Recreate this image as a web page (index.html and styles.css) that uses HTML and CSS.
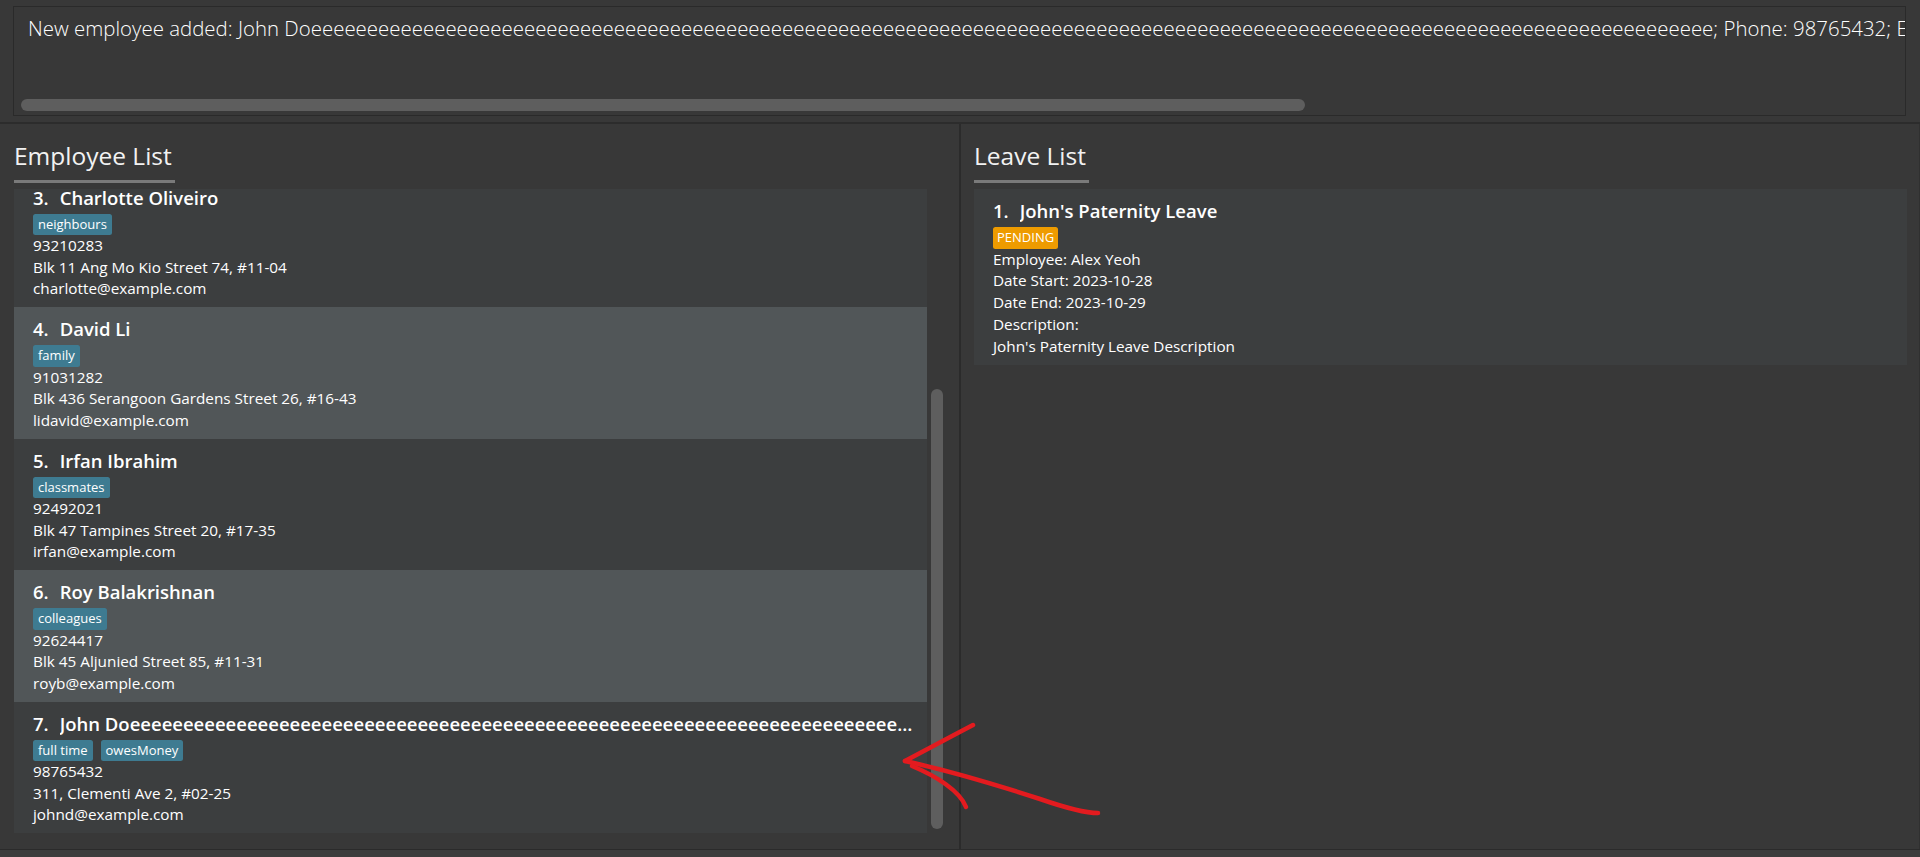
FILE: index.html
```html
<!DOCTYPE html>
<html lang="en">
<head>
<meta charset="utf-8">
<title>HR Manager</title>
<link rel="stylesheet" href="styles.css">
</head>
<body>
<div class="app">
  <div class="result-area">
    <div class="result-box">
      <div class="result-viewport">
        <div class="result-text">New employee added: John Doeeeeeeeeeeeeeeeeeeeeeeeeeeeeeeeeeeeeeeeeeeeeeeeeeeeeeeeeeeeeeeeeeeeeeeeeeeeeeeeeeeeeeeeeeeeeeeeeeeeeeeeeeeeeeeeeeeeeeeeeeeeee; Phone: 98765432; Email: johnd@example.com; Address: 311, Clementi Ave 2, #02-25; Tags: [full time][owesMoney]</div>
      </div>
      <div class="hscroll"><div class="hthumb"></div></div>
    </div>
  </div>
  <div class="hdivider"></div>
  <div class="panels">
    <section class="panel panel-left">
      <div class="panel-head"><h2 class="panel-title">Employee List</h2></div>
      <div class="list-view">
        <div class="list-viewport">
          <div class="list-content scrolled">
            <div class="card">
              <div class="card-title"><span class="card-id">3.</span><span class="card-name">Charlotte Oliveiro</span></div>
              <div class="tags"><span class="tag">neighbours</span></div>
              <div class="line">93210283</div>
              <div class="line">Blk 11 Ang Mo Kio Street 74, #11-04</div>
              <div class="line">charlotte@example.com</div>
            </div>
            <div class="card">
              <div class="card-title"><span class="card-id">4.</span><span class="card-name">David Li</span></div>
              <div class="tags"><span class="tag">family</span></div>
              <div class="line">91031282</div>
              <div class="line">Blk 436 Serangoon Gardens Street 26, #16-43</div>
              <div class="line">lidavid@example.com</div>
            </div>
            <div class="card">
              <div class="card-title"><span class="card-id">5.</span><span class="card-name">Irfan Ibrahim</span></div>
              <div class="tags"><span class="tag">classmates</span></div>
              <div class="line">92492021</div>
              <div class="line">Blk 47 Tampines Street 20, #17-35</div>
              <div class="line">irfan@example.com</div>
            </div>
            <div class="card">
              <div class="card-title"><span class="card-id">6.</span><span class="card-name">Roy Balakrishnan</span></div>
              <div class="tags"><span class="tag">colleagues</span></div>
              <div class="line">92624417</div>
              <div class="line">Blk 45 Aljunied Street 85, #11-31</div>
              <div class="line">royb@example.com</div>
            </div>
            <div class="card">
              <div class="card-title"><span class="card-id">7.</span><span class="card-name">John Doeeeeeeeeeeeeeeeeeeeeeeeeeeeeeeeeeeeeeeeeeeeeeeeeeeeeeeeeeeeeeeeeeeeeeeeeeeeeeeeeeeeeeeeeeeeeeeeeeeeeeeeeeeeeeeeeeeeeeeeeeeeee</span></div>
              <div class="tags"><span class="tag">full time</span><span class="tag">owesMoney</span></div>
              <div class="line">98765432</div>
              <div class="line">311, Clementi Ave 2, #02-25</div>
              <div class="line">johnd@example.com</div>
            </div>
          </div>
        </div>
        <div class="vscroll"><div class="vthumb"></div></div>
      </div>
    </section>
    <div class="vdivider"></div>
    <section class="panel panel-right">
      <div class="panel-head"><h2 class="panel-title">Leave List</h2></div>
      <div class="list-view">
        <div class="list-viewport">
          <div class="list-content">
            <div class="card leave-card">
              <div class="card-title"><span class="card-id">1.</span><span class="card-name">John's Paternity Leave</span></div>
              <div class="tags"><span class="tag tag-pending">PENDING</span></div>
              <div class="line">Employee: Alex Yeoh</div>
              <div class="line">Date Start: 2023-10-28</div>
              <div class="line">Date End: 2023-10-29</div>
              <div class="line">Description:</div>
              <div class="line">John's Paternity Leave Description</div>
            </div>
          </div>
        </div>
      </div>
    </section>
    <div class="edge"></div>
  </div>
  <div class="status-line"></div>
  <div class="status-bar"></div>
</div>
<svg class="annotation" width="1920" height="857" viewBox="0 0 1920 857" xmlns="http://www.w3.org/2000/svg">
  <g fill="none" stroke="#e31b1f" stroke-width="4.5" stroke-linecap="round" stroke-linejoin="round">
    <path d="M973 725 C 950 737, 926 750, 905 761"/>
    <path d="M905 761 C 932 767, 985 781, 1040 799 C 1066 808, 1085 813, 1098 813"/>
    <path d="M912 766 C 936 776, 960 791, 966 807"/>
  </g>
</svg>
</body>
</html>
```
FILE: styles.css
```css
* {
  box-sizing: border-box;
}

html, body {
  margin: 0;
  padding: 0;
  width: 1920px;
  height: 857px;
  overflow: hidden;
  background: #383838;
}

body {
  position: relative;
  font-family: "Open Sans", "Noto Sans", sans-serif;
  color: #ffffff;
}

.app {
  display: flex;
  flex-direction: column;
  width: 1920px;
  height: 857px;
  background: #383838;
}

/* ---------- result display ---------- */
.result-area {
  height: 122px;
  padding: 6px 14px 6px 13px;
  flex: none;
}

.result-box {
  height: 110px;
  border: 1px solid #2a2a2a;
  background: #383838;
  display: flex;
  flex-direction: column;
}

.result-viewport {
  flex: 1;
  overflow: hidden;
  padding: 8px 0 0 14px;
}

.result-text {
  white-space: nowrap;
  font-weight: 300;
  font-size: 20.4px;
  line-height: 27.8px;
  letter-spacing: 0.02px;
  color: #ffffff;
}

.hscroll {
  height: 16px;
  padding: 0 0 0 7px;
  flex: none;
}

.hthumb {
  width: 1284px;
  height: 12px;
  border-radius: 6px;
  background: #5e5e5e;
}

.hdivider {
  height: 2px;
  background: #2c2c2c;
  flex: none;
}

/* ---------- panels ---------- */
.panels {
  height: 725px;
  display: flex;
  flex: none;
}

.panel {
  display: flex;
  flex-direction: column;
}

.panel-left {
  width: 959px;
  padding: 14.5px 11px 0 14px;
}

.panel-right {
  width: 958px;
  padding: 14.5px 12px 0 13px;
}

.vdivider {
  width: 2px;
  background: #2b2b2b;
}

.edge {
  width: 1px;
  background: #303030;
}

.panel-head {
  margin-bottom: 6px;
}

.panel-title {
  display: inline-block;
  margin: 0;
  padding: 0 3px 7.5px 0;
  font-size: 24.5px;
  font-weight: 400;
  line-height: 34px;
  color: #f2f2f2;
  border-bottom: 3px solid #7a7a7a;
}

.list-view {
  display: flex;
  height: 645px;
}

.list-viewport {
  flex: 1;
  min-width: 0;
  overflow: hidden;
}

.list-content.scrolled {
  margin-top: -13.5px;
}

.vscroll {
  width: 21px;
  flex: none;
  padding: 200px 0 0 4px;
}

.vthumb {
  width: 12px;
  height: 440px;
  border-radius: 6px;
  background: #5e5e5e;
}

/* ---------- cards ---------- */
.card {
  height: 131.5px;
  padding: 7px 6px 0 19px;
  background: #3c3e3f;
}

.card:nth-child(even) {
  background: #515658;
}

.leave-card {
  height: auto;
  padding-bottom: 7px;
}

.leave-card .line {
  line-height: 21.9px;
}

.card-title {
  display: flex;
  font-size: 18.5px;
  font-weight: 600;
  line-height: 29px;
  margin-bottom: 2px;
  color: #ffffff;
  white-space: nowrap;
}

.card-id {
  flex: none;
  margin-right: 11px;
}

.card-name {
  min-width: 0;
  overflow: hidden;
  text-overflow: ellipsis;
}

.tags {
  display: flex;
  gap: 8px;
  height: 21.5px;
}

.tag {
  font-size: 13px;
  line-height: 19px;
  padding: 1.25px 5px;
  border-radius: 2.5px;
  background: #3e7b91;
  color: #ffffff;
}

.tag-pending {
  background: #ee9b00;
  padding: 1.25px 4px;
}

.line {
  font-size: 15.3px;
  line-height: 21.67px;
  color: #ffffff;
  white-space: nowrap;
}

/* ---------- status ---------- */
.status-line {
  height: 1px;
  background: #2b2b2b;
  flex: none;
}

.status-bar {
  flex: 1;
  background: #3c3c3c;
}

/* ---------- hand-drawn annotation ---------- */
.annotation {
  position: absolute;
  left: 0;
  top: 0;
  pointer-events: none;
}
```
